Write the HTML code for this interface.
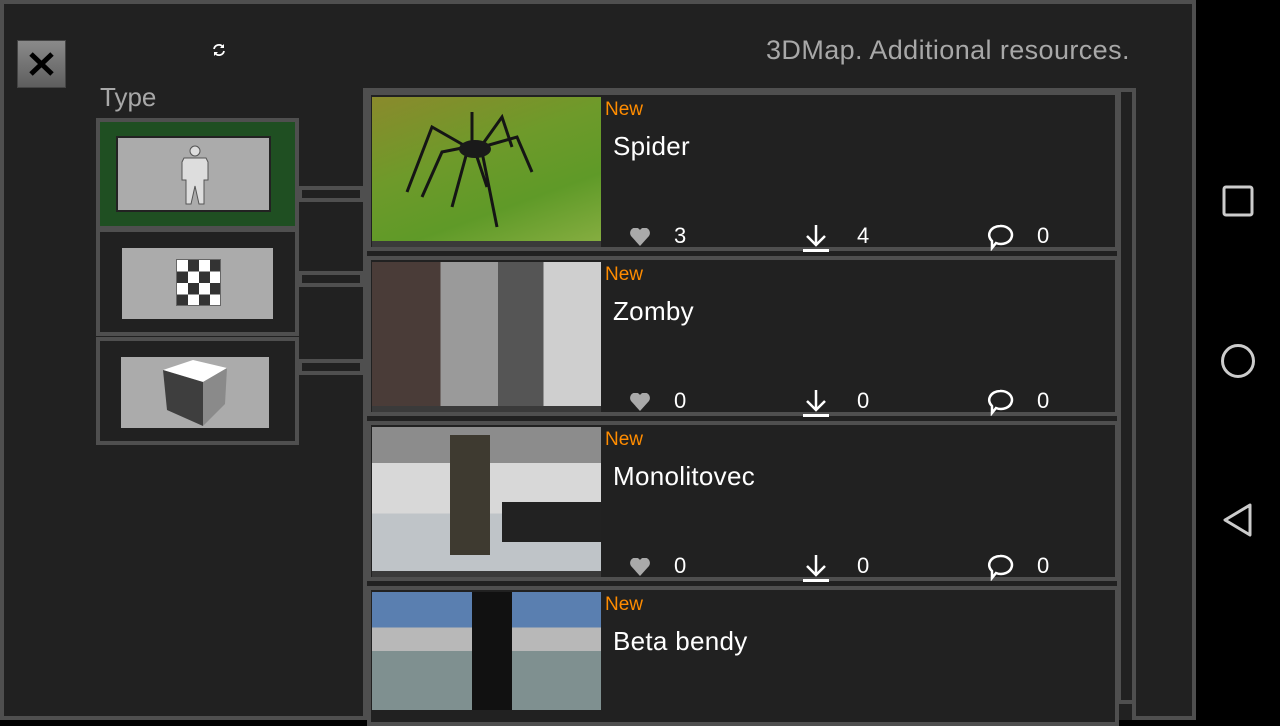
<!DOCTYPE html>
<html><head><meta charset="utf-8"><style>
*{margin:0;padding:0;box-sizing:border-box}
body{width:1280px;height:720px;background:#000;position:relative;overflow:hidden;font-family:"Liberation Sans",sans-serif}
.main{position:absolute;left:0;top:0;width:1196px;height:720px;background:#212121;border:4px solid #4f4f4f}
.abs{position:absolute}
.close{left:17px;top:40px;width:49px;height:48px;background:linear-gradient(#8a8a8a,#5e5e5e);border:1px solid #444}
.title{left:766px;top:35px;color:#a8a8a8;font-size:27px;letter-spacing:0.4px}
.type{left:100px;top:82px;color:#a8a8a8;font-size:26px}
.tcell{left:96px;width:203px;border:4px solid #4f4f4f;background:#212121}
.tcell .in{position:absolute;background:#ababab}
.conn{left:298px;width:66px;height:16px;border:4px solid #4f4f4f;background:#212121}
.list{left:363px;top:88px;width:773px;height:632px;border:4px solid #4f4f4f;border-bottom:none;background:#212121}
.sb{left:1117px;top:88px;width:19px;height:616px;border:4px solid #4f4f4f;border-top:none}
.item{left:367px;width:752px;height:160px;border:4px solid #4f4f4f;background:#212121}
.thumb{position:absolute;left:1px;top:2px;width:229px;height:150px;border-bottom:6px solid #3a3a3a;overflow:hidden}
.new{position:absolute;left:234px;top:4px;color:#ff8c00;font-size:19px}
.name{position:absolute;left:242px;top:36px;color:#fff;font-size:26px;letter-spacing:0.3px}
.st{position:absolute;top:128px;color:#fff;font-size:22px}
.nav{position:absolute;left:1196px;top:0;width:84px;height:720px;background:#000}
</style></head><body>
<div class="main"></div>
<div class="abs close"><svg width="47" height="46" viewBox="0 0 47 46"><path d="M13 13L34 33M34 13L13 33" stroke="#000" stroke-width="5"/></svg></div>
<svg class="abs" style="left:211px;top:42px" width="16" height="16" viewBox="0 0 16 16"><path d="M3 7a5 5 0 0 1 9-2M13 9a5 5 0 0 1-9 2" stroke="#fff" stroke-width="1.8" fill="none"/><path d="M13 2v4h-4zM3 14v-4h4z" fill="#fff"/></svg>
<div class="abs title">3DMap. Additional resources.</div>
<div class="abs type">Type</div>
<div class="abs tcell" style="top:118px;height:112px;background:#1f4f22"><div class="in" style="left:16px;top:14px;width:155px;height:76px;border:2px solid #222">
<svg style="position:absolute;left:60px;top:6px" width="34" height="62" viewBox="0 0 34 62"><path d="M17 2a5 5 0 0 1 0 10a5 5 0 0 1 0-10zM6 14h22l2 4v18h-4v24h-5l-4-18l-4 18h-5V36H4V18z" fill="#ddd" stroke="#555" stroke-width="1"/></svg></div></div>
<div class="abs tcell" style="top:228px;height:108px"><div class="in" style="left:22px;top:16px;width:151px;height:71px">
<div style="position:absolute;left:54px;top:11px;width:45px;height:47px;background:repeating-conic-gradient(#333 0 25%,#fff 0 50%) 0 0/22px 23px;border:1px solid #666"></div></div></div>
<div class="abs tcell" style="top:337px;height:108px"><div class="in" style="left:21px;top:16px;width:148px;height:71px">
<svg style="position:absolute;left:42px;top:3px" width="66" height="66" viewBox="0 0 66 66"><path d="M0 10L30 0L64 8L40 22z" fill="#fff"/><path d="M0 10L40 22L40 66L4 50z" fill="#3e3e3e"/><path d="M40 22L64 8L62 44L40 66z" fill="#8a8a8a"/></svg></div></div>
<div class="abs conn" style="top:186px"></div>
<div class="abs conn" style="top:271px"></div>
<div class="abs conn" style="top:359px"></div>
<div class="abs list"></div>
<div class="abs sb"></div>

<div class="abs item" style="top:91px"><div class="thumb" style="background:linear-gradient(160deg,#8a8a2c,#6e9a2a 40%,#5f9a28 70%,#85ad40)">
<svg width="229" height="150" viewBox="0 0 229 150" style="position:absolute;left:0;top:0"><g stroke="#151515" stroke-width="3" fill="none"><path d="M95 50L60 30L35 95M95 50L70 55L50 100M95 55L80 110M110 55L125 130M110 50L145 40L160 75M110 48L130 20L140 50M100 48L100 15M105 60L115 90"/></g><ellipse cx="103" cy="52" rx="16" ry="9" fill="#1a1a1a"/></svg></div>
<div class="new">New</div><div class="name">Spider</div>
<svg class="st" style="left:258px;top:133px" width="22" height="18" viewBox="0 0 22 18"><path d="M11 18L2 8a5 5 0 0 1 9-6a5 5 0 0 1 9 6z" fill="#aaa"/></svg><div class="st" style="left:303px">3</div>
<svg class="st" style="left:430px;top:128px" width="30" height="30" viewBox="0 0 30 30"><path d="M15 2v20M6 13l9 9l9-9" stroke="#fff" stroke-width="2.5" fill="none"/><rect x="2" y="26" width="26" height="3" fill="#fff"/></svg><div class="st" style="left:486px">4</div>
<svg class="st" style="left:615px;top:128px" width="28" height="28" viewBox="0 0 28 28"><path d="M14 3a11 9 0 1 1-4 17l-4 5v-7A11 9 0 0 1 14 3z" stroke="#fff" stroke-width="2.5" fill="none"/></svg><div class="st" style="left:666px">0</div></div>

<div class="abs item" style="top:256px"><div class="thumb" style="background:linear-gradient(90deg,#4a3c38 0 30%,#9a9a9a 30% 55%,#555 55% 75%,#cfcfcf 75%)"></div>
<div class="new">New</div><div class="name">Zomby</div>
<svg class="st" style="left:258px;top:133px" width="22" height="18" viewBox="0 0 22 18"><path d="M11 18L2 8a5 5 0 0 1 9-6a5 5 0 0 1 9 6z" fill="#aaa"/></svg><div class="st" style="left:303px">0</div>
<svg class="st" style="left:430px;top:128px" width="30" height="30" viewBox="0 0 30 30"><path d="M15 2v20M6 13l9 9l9-9" stroke="#fff" stroke-width="2.5" fill="none"/><rect x="2" y="26" width="26" height="3" fill="#fff"/></svg><div class="st" style="left:486px">0</div>
<svg class="st" style="left:615px;top:128px" width="28" height="28" viewBox="0 0 28 28"><path d="M14 3a11 9 0 1 1-4 17l-4 5v-7A11 9 0 0 1 14 3z" stroke="#fff" stroke-width="2.5" fill="none"/></svg><div class="st" style="left:666px">0</div></div>

<div class="abs item" style="top:421px"><div class="thumb" style="background:linear-gradient(#8c8c8c 0 25%,#d8d8d8 25% 60%,#bfc4c8 60%)"><div style="position:absolute;left:78px;top:8px;width:40px;height:120px;background:#3e3a30"></div><div style="position:absolute;left:130px;top:75px;width:100px;height:40px;background:#222"></div></div>
<div class="new">New</div><div class="name">Monolitovec</div>
<svg class="st" style="left:258px;top:133px" width="22" height="18" viewBox="0 0 22 18"><path d="M11 18L2 8a5 5 0 0 1 9-6a5 5 0 0 1 9 6z" fill="#aaa"/></svg><div class="st" style="left:303px">0</div>
<svg class="st" style="left:430px;top:128px" width="30" height="30" viewBox="0 0 30 30"><path d="M15 2v20M6 13l9 9l9-9" stroke="#fff" stroke-width="2.5" fill="none"/><rect x="2" y="26" width="26" height="3" fill="#fff"/></svg><div class="st" style="left:486px">0</div>
<svg class="st" style="left:615px;top:128px" width="28" height="28" viewBox="0 0 28 28"><path d="M14 3a11 9 0 1 1-4 17l-4 5v-7A11 9 0 0 1 14 3z" stroke="#fff" stroke-width="2.5" fill="none"/></svg><div class="st" style="left:666px">0</div></div>

<div class="abs item" style="top:586px;height:140px"><div class="thumb" style="height:118px;border:none;background:linear-gradient(#5a7fb0 0 30%,#b8b8b8 30% 50%,#7f9090 50%)"><div style="position:absolute;left:100px;top:0;width:40px;height:118px;background:#111"></div></div>
<div class="new">New</div><div class="name">Beta bendy</div></div>

<div class="nav">
<svg style="position:absolute;left:26px;top:185px" width="32" height="32"><rect x="2" y="2" width="28" height="28" rx="2" stroke="#ccc" stroke-width="3" fill="none"/></svg>
<svg style="position:absolute;left:24px;top:343px" width="36" height="36"><circle cx="18" cy="18" r="15.5" stroke="#ccc" stroke-width="3" fill="none"/></svg>
<svg style="position:absolute;left:24px;top:502px" width="36" height="36"><path d="M30 3L5 18L30 33z" stroke="#ccc" stroke-width="3" fill="none" stroke-linejoin="round"/></svg>
</div>
</body></html>
